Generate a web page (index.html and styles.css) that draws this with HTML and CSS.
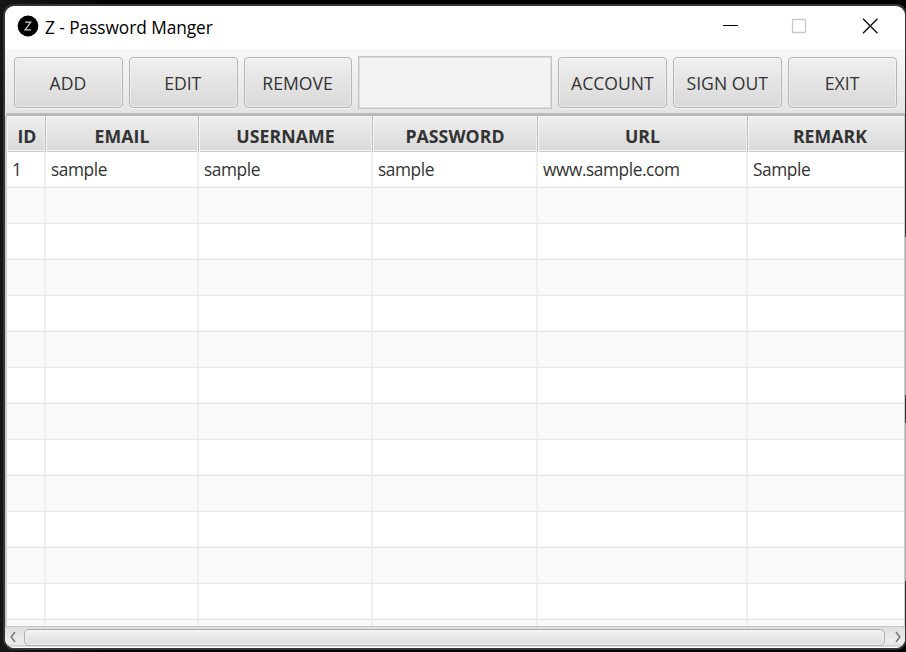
FILE: index.html
```html
<!DOCTYPE html>
<html lang="en">
<head>
<meta charset="utf-8">
<title>Z - Password Manger</title>
<link rel="stylesheet" href="styles.css">
</head>
<body>
<div class="window">
  <header class="titlebar">
    <svg class="logo" viewBox="0 0 22 22"><circle cx="11" cy="11" r="10.4"/><path d="M8 7.200h5.800L8 14.800h6"/></svg>
    <span class="title">Z - Password Manger</span>
    <svg class="controls" viewBox="0 0 156 16"><path d="M0 7.500h15" stroke="#000"/><rect x="69.500" y="1.500" width="13" height="13" rx="1" stroke="#c8c8c8" stroke-width="1.300"/><path d="M140 .8l14.500 14.400M154.500 .8L140 15.200" stroke="#111" stroke-width="1.350"/></svg>
  </header>
  <nav class="toolbar">
    <button class="add">ADD</button>
    <button class="edit">EDIT</button>
    <button class="remove">REMOVE</button>
    <input type="text" aria-label="Search">
    <button class="account">ACCOUNT</button>
    <button class="signout">SIGN OUT</button>
    <button class="exit">EXIT</button>
  </nav>
  <main class="table">
    <div class="row head"><span>ID</span><span>EMAIL</span><span>USERNAME</span><span>PASSWORD</span><span>URL</span><span>REMARK</span></div>
    <div class="row"><span>1</span><span>sample</span><span>sample</span><span>sample</span><span class="url">www.sample.com</span><span>Sample</span></div>
    <div class="row"><span></span><span></span><span></span><span></span><span></span><span></span></div>
    <div class="row"><span></span><span></span><span></span><span></span><span></span><span></span></div>
    <div class="row"><span></span><span></span><span></span><span></span><span></span><span></span></div>
    <div class="row"><span></span><span></span><span></span><span></span><span></span><span></span></div>
    <div class="row"><span></span><span></span><span></span><span></span><span></span><span></span></div>
    <div class="row"><span></span><span></span><span></span><span></span><span></span><span></span></div>
    <div class="row"><span></span><span></span><span></span><span></span><span></span><span></span></div>
    <div class="row"><span></span><span></span><span></span><span></span><span></span><span></span></div>
    <div class="row"><span></span><span></span><span></span><span></span><span></span><span></span></div>
    <div class="row"><span></span><span></span><span></span><span></span><span></span><span></span></div>
    <div class="row"><span></span><span></span><span></span><span></span><span></span><span></span></div>
    <div class="row"><span></span><span></span><span></span><span></span><span></span><span></span></div>
    <div class="row"><span></span><span></span><span></span><span></span><span></span><span></span></div>
  </main>
  <footer class="scrollbar">
    <svg viewBox="0 0 6 12"><path d="M5 1L1.200 6L5 11"/></svg>
    <div class="thumb"></div>
    <svg viewBox="0 0 6 12"><path d="M1 1l3.800 5L1 11"/></svg>
  </footer>
</div>
<div class="edge"></div>
</body>
</html>
```
FILE: styles.css
```css
* { box-sizing: border-box; }
body {
  margin: 0;
  width: 906px;
  height: 652px;
  padding: 4px 0 0 3px;
  overflow: hidden;
  position: relative;
  background: linear-gradient(90deg, #161616, #0c0c0c 80px, #000 105px);
  font-family: "Open Sans", "Noto Sans", sans-serif;
  color: #333;
}
.window {
  width: 904px;
  height: 646px;
  border: 2px solid #343434;
  border-radius: 11px;
  overflow: hidden;
  background: #fff;
  display: flex;
  flex-direction: column;
}
/* light from the neighbouring windows along the right border */
.edge {
  position: absolute;
  right: 0;
  top: 20px;
  width: 1px;
  height: 617px;
  background: linear-gradient(#343434 217px, #aaa 217px 375px, #343434 375px 403px, #aaa 403px 561px, #343434 561px);
}
.titlebar {
  height: 43px;
  flex: none;
  display: flex;
  align-items: center;
  padding: 0 26px 3px 12px;
  color: #000;
}
.logo { width: 22px; height: 22px; }
.logo path { fill: none; stroke: #ccc; stroke-width: 1.2; }
.title { font-size: 17.3px; letter-spacing: -.05px; margin: 3px 0 0 6px; white-space: nowrap; }
.controls { width: 156px; height: 16px; margin-left: auto; fill: none; }
.toolbar {
  height: 67px;
  flex: none;
  display: flex;
  align-items: center;
  gap: 6px;
  padding: 2px 8px 0 8px;
  background: linear-gradient(#f8f8f8, #e4e4e4 63px);
  border-bottom: 3px solid #bdbdbd;
  border-left: 1px solid #eee;
  border-image: linear-gradient(#b8b8b8, #b8b8b8) 0 0 3 0;
}
button {
  width: 109px;
  height: 51px;
  flex: 1 1 109px;
  padding: 1px 1px 0 0;
  border: 1.5px solid #b5b5b5;
  border-radius: 4px;
  background: linear-gradient(#efefef, #d9d9d9);
  box-shadow: inset 0 0 0 1px #f3f3f3aa, inset 0 1px #fafafa, 0 1px #f6f6f6;
  font: 17.6px "Open Sans", sans-serif;
  color: #333;
  white-space: nowrap;
}
input {
  width: 194px;
  height: 53px;
  flex: none;
  border: 1.5px solid #c4c4c4;
  background: #f3f3f3;
  box-shadow: inset 0 0 0 1px #dedede;
  padding: 0 8px;
}
.table {
  flex: 1;
  min-height: 0;
  overflow: hidden;
  border-left: 2px solid #ccc;
  border-right: 1px solid #ccc;
}
.row {
  display: grid;
  grid-template-columns: 39px 153px 174px 165px 210px 165px;
  height: 36px;
  background: #fff;
  border-bottom: 1px solid #e9e9e9;
  box-shadow: inset 0 -1px #f4f4f4;
}
.row:nth-child(odd) { background: #f9f9f9; }
.row span {
  border-right: 2px solid #efefef;
  padding-left: 5px;
  font-size: 17.3px;
  letter-spacing: -.42px;
  line-height: 35px;
  white-space: nowrap;
}
.row.head {
  background: linear-gradient(#efefef, #d9d9d9);
  border-bottom-color: #c8c8c8;
}
.row.head span {
  padding: 3px 0 0;
  line-height: 34px;
  text-align: center;
  font-size: 17.7px;
  font-weight: 700;
  letter-spacing: .06px;
  border-right: 1px solid #bdbdbd;
  box-shadow: inset 1px 1px #f5f5f5, inset -1px 0 #eee;
}
.row.head span:first-child { padding-left: 2px; }
.scrollbar {
  height: 22px;
  flex: none;
  display: flex;
  align-items: center;
  gap: 8px;
  padding: 0 4px 1px 5px;
  border-top: 1px solid #c8c8c8;
  background: linear-gradient(#dedede, #ececec 14px, #e7e7e7 18px, #bbb 19px, #fff 20px);
}
.scrollbar svg { width: 6px; height: 12px; flex: none; fill: none; stroke: #777; stroke-width: 1.5; }
.scrollbar svg:last-child { margin-left: 2px; }
.thumb {
  flex: 1;
  height: 17px;
  border: 1.5px solid #adadad;
  border-radius: 5px;
  background: linear-gradient(#f4f4f4, #dcdcdc);
  box-shadow: inset 0 0 0 1px #f2f2f2;
}
```
